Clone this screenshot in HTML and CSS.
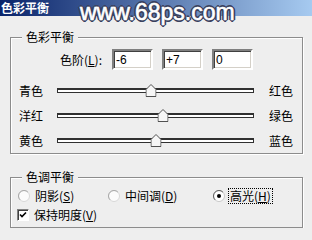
FILE: index.html
```html
<!DOCTYPE html>
<html lang="zh-CN">
<head>
  <meta charset="UTF-8" />
  <title>色彩平衡</title>
  <link rel="stylesheet" href="styles.css">
</head>
<body>
  <div class="titlebar"><span class="title">色彩平衡</span></div>
  <div class="watermark">www.68ps.com</div>

  <div class="dialog">
    <section class="group balance">
      <div class="group-title">色彩平衡</div>

      <div class="levels">
        <label class="levels-label">色阶(<u>L</u>):</label>
        <input class="field" type="text" value="-6" readonly />
        <input class="field" type="text" value="+7" readonly />
        <input class="field" type="text" value="0" readonly />
      </div>

      <div class="slider-row">
        <span class="from">青色</span>
        <div class="track">
          <span class="thumb" style="left: 47.5%">
            <svg width="11" height="13" viewBox="0 0 11 13"><path d="M5.5 0.5 L10.5 5.5 V12.5 H0.5 V5.5 Z" fill="#f6f6f6" stroke="#505050" /></svg>
          </span>
        </div>
        <span class="to">红色</span>
      </div>

      <div class="slider-row">
        <span class="from">洋红</span>
        <div class="track">
          <span class="thumb" style="left: 54%">
            <svg width="11" height="13" viewBox="0 0 11 13"><path d="M5.5 0.5 L10.5 5.5 V12.5 H0.5 V5.5 Z" fill="#f6f6f6" stroke="#505050" /></svg>
          </span>
        </div>
        <span class="to">绿色</span>
      </div>

      <div class="slider-row">
        <span class="from">黄色</span>
        <div class="track">
          <span class="thumb" style="left: 50.5%">
            <svg width="11" height="13" viewBox="0 0 11 13"><path d="M5.5 0.5 L10.5 5.5 V12.5 H0.5 V5.5 Z" fill="#f6f6f6" stroke="#505050" /></svg>
          </span>
        </div>
        <span class="to">蓝色</span>
      </div>
    </section>

    <section class="group tone">
      <div class="group-title">色调平衡</div>

      <div class="tone-row">
        <label class="option shadows">
          <svg class="radio" width="12" height="12" viewBox="0 0 12 12">
            <circle cx="6" cy="6" r="5.5" fill="#fbfbfb" stroke="#d8d8d8" />
            <path d="M2.1 9.9 A5.5 5.5 0 0 1 9.9 2.1" fill="none" stroke="#a8a8a8" />
          </svg>
          <span class="option-text">阴影(<u>S</u>)</span>
        </label>
        <label class="option midtones">
          <svg class="radio" width="12" height="12" viewBox="0 0 12 12">
            <circle cx="6" cy="6" r="5.5" fill="#fbfbfb" stroke="#d8d8d8" />
            <path d="M2.1 9.9 A5.5 5.5 0 0 1 9.9 2.1" fill="none" stroke="#a8a8a8" />
          </svg>
          <span class="option-text">中间调(<u>D</u>)</span>
        </label>
        <label class="option">
          <svg class="radio" width="12" height="12" viewBox="0 0 12 12">
            <circle cx="6" cy="6" r="5.5" fill="#fff" stroke="#c8c8c8" />
            <path d="M2.1 9.9 A5.5 5.5 0 0 1 9.9 2.1" fill="none" stroke="#606060" />
            <circle cx="6" cy="6" r="2" fill="#000" />
          </svg>
          <span class="option-text focused">高光(<u>H</u>)</span>
        </label>
      </div>

      <div class="tone-row check-row">
        <label class="option">
          <span class="checkbox">
            <svg width="8" height="8" viewBox="0 0 8 8"><path d="M1 3.5 L3 5.5 L7 1.5" fill="none" stroke="#000" stroke-width="1.6" /></svg>
          </span>
          <span class="option-text">保持明度(<u>V</u>)</span>
        </label>
      </div>
    </section>
  </div>
</body>
</html>
```

FILE: styles.css
```css
body {
  margin: 0;
  background-color: #eeeeee;
  color: #000;
  font-family: "Noto Sans CJK SC", "Noto Sans", sans-serif;
  font-size: 12px;
  line-height: 14px;
}

.titlebar {
  height: 16px;
  background: linear-gradient(to right, #0a246a, #a6caf0);
  color: #fff;
}

.title {
  display: block;
  padding-left: 1px;
  font-weight: bold;
  line-height: 16px;
}

/* site watermark stamped over the window */
.watermark {
  position: absolute;
  left: 80px;
  top: 1px;
  font-family: "Liberation Sans", Arial, sans-serif;
  font-size: 23px;
  line-height: 23px;
  color: #fff;
  -webkit-text-stroke: 0.6px #fff;
  text-shadow:
    1px 0 #39415e, -1px 0 #39415e, 0 1px #39415e, 0 -1px #39415e,
    1px 1px #39415e, -1px -1px #39415e, 1px -1px #39415e, -1px 1px #39415e,
    2px 0 #39415e, -2px 0 #39415e, 0 2px #39415e, 0 -2px #39415e;
}

.dialog {
  padding: 0 9px 0 10px;
}

.group {
  border: 1px solid #8c8c8c;
  box-shadow: 1px 1px 0 #fff, inset 1px 1px 0 #fff;
}

.group-title {
  width: max-content;
  margin: -8px 0 0 11px;
  padding: 0 4px;
  background-color: #eeeeee;
  line-height: 14px;
}

.balance {
  margin-top: 21px;
}

.tone {
  margin-top: 23px;
}

.levels {
  display: flex;
  align-items: center;
  margin: 5px 0 8px;
}

.levels-label {
  width: 91px;
  margin-right: 10px;
  text-align: right;
}

.field {
  box-sizing: border-box;
  width: 41px;
  height: 21px;
  margin: 0 9px 0 0;
  padding: 0 2px;
  border: 2px solid;
  border-color: #808080 #fff #fff #808080;
  box-shadow: inset 1px 1px 0 #404040, inset -1px -1px 0 #d4d0c8;
  background: #fff;
  font-family: "Liberation Sans", Arial, sans-serif;
  font-size: 12px;
  color: #000;
  outline: none;
}

.slider-row {
  display: grid;
  grid-template-columns: 38px 197px auto;
  align-items: center;
  height: 25px;
  padding-left: 8px;
}

.to {
  margin-left: 15px;
}

.track {
  position: relative;
  box-sizing: border-box;
  height: 5px;
  border: 1px solid #303030;
  border-top-width: 2px;
  background: #fff;
}

.thumb {
  position: absolute;
  top: -6px;
  width: 11px;
  height: 13px;
  transform: translateX(-50%);
}

.thumb svg {
  display: block;
}

.tone-row {
  display: flex;
  align-items: center;
  height: 19px;
  padding-left: 7px;
  margin-top: 2px;
}

.check-row {
  height: 20px;
  margin: 0 0 2px;
}

.option {
  display: flex;
  align-items: center;
}

.shadows {
  width: 90px;
}

.midtones {
  width: 105px;
}

.radio {
  display: block;
  margin-right: 3px;
}

.option-text {
  padding: 0 1px;
  border: 1px solid transparent;
  line-height: 14px;
}

.option-text.focused {
  border: 1px dotted #000;
}

.checkbox {
  box-sizing: border-box;
  display: flex;
  align-items: center;
  justify-content: center;
  width: 12px;
  height: 12px;
  margin: 0 3px 0 -1px;
  border: 1px solid;
  border-color: #808080 #fff #fff #808080;
  box-shadow: inset 1px 1px 0 #404040;
  background: #fff;
}

.checkbox svg {
  display: block;
}
```
